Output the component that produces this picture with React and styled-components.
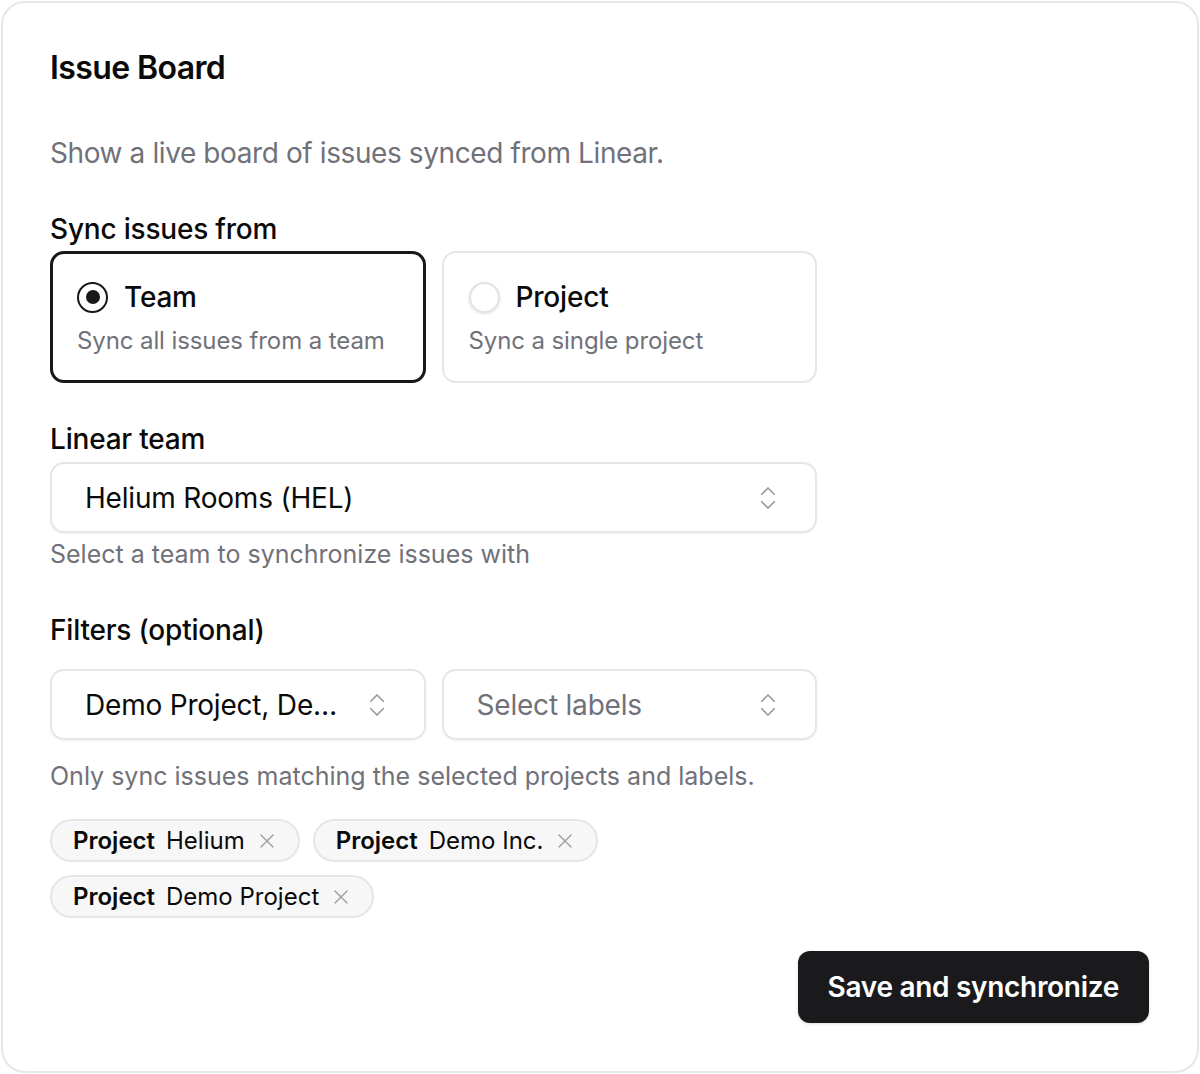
import React from "react";
import styled, { createGlobalStyle } from "styled-components";
import { ChevronsUpDown, X } from "lucide-react";

const Global = createGlobalStyle`
  html, body { margin: 0; padding: 0; background: #ffffff; }
  body { font-family: Inter, "Noto Sans", "Liberation Sans", sans-serif; color: #0a0a0a; -webkit-font-smoothing: antialiased; }
  * { box-sizing: border-box; }
`;

const Card = styled.div`
  margin: 1px;
  width: 1198px;
  height: 1072px;
  border: 2px solid #e7e7e7;
  border-radius: 24px;
  background: #fff;
  padding: 45px 47px 47px 47px;
  display: flex;
  flex-direction: column;
`;

const Title = styled.h1`
  margin: 0;
  font-size: 32px;
  line-height: 40px;
  font-weight: 600;
  letter-spacing: -0.6px;
`;

const Description = styled.p`
  margin: 45px 0 0 0;
  font-size: 28px;
  line-height: 40px;
  color: #71717a;
  letter-spacing: -0.4px;
`;

const Form = styled.div`
  width: 767px;
  display: flex;
  flex-direction: column;
`;

const Label = styled.div`
  font-size: 28px;
  line-height: 36px;
  font-weight: 500;
  margin-top: ${(p) => p.$top || 0}px;
  letter-spacing: -0.2px;
`;

const TwoCols = styled.div`
  display: grid;
  grid-template-columns: 1fr 1fr;
  gap: 16px;
  margin-top: ${(p) => p.$top || 0}px;
`;

const RadioCard = styled.div`
  height: 132px;
  border-radius: 14px;
  border: ${(p) => (p.$active ? "3px solid #18181b" : "2px solid #e6e6e6")};
  padding: ${(p) => (p.$active ? "25px 24px" : "26px 25px")};
  display: flex;
  flex-direction: column;
  gap: 10px;
`;

const RadioRow = styled.div`
  display: flex;
  align-items: center;
  gap: 16px;
`;

const RadioCircle = styled.span`
  width: 31px;
  height: 31px;
  border-radius: 50%;
  flex: none;
  display: flex;
  align-items: center;
  justify-content: center;
  border: 2px solid ${(p) => (p.$active ? "#18181b" : "#e2e2e2")};
  box-shadow: ${(p) => (p.$active ? "none" : "0 1px 3px rgba(0,0,0,0.12)")};
  &::after {
    content: "";
    display: ${(p) => (p.$active ? "block" : "none")};
    width: 14px;
    height: 14px;
    border-radius: 50%;
    background: #18181b;
  }
`;

const RadioTitle = styled.span`
  font-size: 28px;
  line-height: 36px;
  font-weight: 500;
  letter-spacing: -0.2px;
`;

const RadioSub = styled.span`
  font-size: 24px;
  line-height: 32px;
  color: #71717a;
  letter-spacing: -0.1px;
`;

const SelectBox = styled.div`
  height: 71px;
  border: 2px solid #e6e6e6;
  border-radius: 14px;
  box-shadow: 0 1px 2px rgba(0, 0, 0, 0.05);
  padding: 0 32px 0 33px;
  display: flex;
  align-items: center;
  justify-content: space-between;
  gap: 12px;
  margin-top: ${(p) => p.$top || 0}px;
  font-size: 28px;
  color: ${(p) => (p.$placeholder ? "#71717a" : "#0a0a0a")};
  letter-spacing: -0.2px;
  svg { color: #9a9aa2; flex: none; }
`;

const SelectText = styled.span`
  white-space: nowrap;
  overflow: hidden;
  text-overflow: ellipsis;
`;

const Help = styled.div`
  font-size: 25px;
  line-height: 32px;
  color: #71717a;
  margin-top: ${(p) => p.$top || 0}px;
`;

const Badges = styled.div`
  display: flex;
  flex-wrap: wrap;
  gap: 13px 13px;
  margin-top: 27px;
`;

const Badge = styled.span`
  height: 43px;
  border-radius: 999px;
  border: 2px solid #e6e6e6;
  background: #f7f7f7;
  padding: 0 19px 0 21px;
  display: inline-flex;
  align-items: center;
  font-size: 24px;
  color: #0a0a0a;
  svg { color: #a1a1aa; margin-left: 10px; }
`;

const BadgeKey = styled.span`
  font-weight: 600;
  margin-right: 11px;
`;

const Footer = styled.div`
  display: flex;
  justify-content: flex-end;
  margin-top: 33px;
  padding-right: 1px;
`;

const Button = styled.button`
  height: 72px;
  padding: 0 30px;
  border: none;
  border-radius: 12px;
  background: #1a1a1c;
  color: #fff;
  font-family: inherit;
  font-size: 28px;
  font-weight: 600;
  letter-spacing: -0.3px;
  box-shadow: 0 1px 3px rgba(0, 0, 0, 0.15);
`;

const tags = ["Helium", "Demo Inc.", "Demo Project"];

export default function App() {
  return (
    <>
      <Global />
      <Card>
        <Title>Issue Board</Title>
        <Description>Show a live board of issues synced from Linear.</Description>
        <Form>
          <Label $top={38}>Sync issues from</Label>
          <TwoCols $top={4}>
            <RadioCard $active>
              <RadioRow>
                <RadioCircle $active />
                <RadioTitle>Team</RadioTitle>
              </RadioRow>
              <RadioSub>Sync all issues from a team</RadioSub>
            </RadioCard>
            <RadioCard>
              <RadioRow>
                <RadioCircle />
                <RadioTitle>Project</RadioTitle>
              </RadioRow>
              <RadioSub>Sync a single project</RadioSub>
            </RadioCard>
          </TwoCols>
          <Label $top={38}>Linear team</Label>
          <SelectBox $top={5}>
            <SelectText>Helium Rooms (HEL)</SelectText>
            <ChevronsUpDown size={30} strokeWidth={1.4} />
          </SelectBox>
          <Help $top={5}>Select a team to synchronize issues with</Help>
          <Label $top={42}>Filters (optional)</Label>
          <TwoCols $top={21}>
            <SelectBox>
              <SelectText>Demo Project, De…</SelectText>
              <ChevronsUpDown size={30} strokeWidth={1.4} />
            </SelectBox>
            <SelectBox $placeholder>
              <SelectText>Select labels</SelectText>
              <ChevronsUpDown size={30} strokeWidth={1.4} />
            </SelectBox>
          </TwoCols>
          <Help $top={20}>Only sync issues matching the selected projects and labels.</Help>
          <Badges>
            {tags.map((t) => (
              <Badge key={t}>
                <BadgeKey>Project</BadgeKey>
                {t}
                <X size={24} strokeWidth={1.5} />
              </Badge>
            ))}
          </Badges>
        </Form>
        <Footer>
          <Button>Save and synchronize</Button>
        </Footer>
      </Card>
    </>
  );
}
